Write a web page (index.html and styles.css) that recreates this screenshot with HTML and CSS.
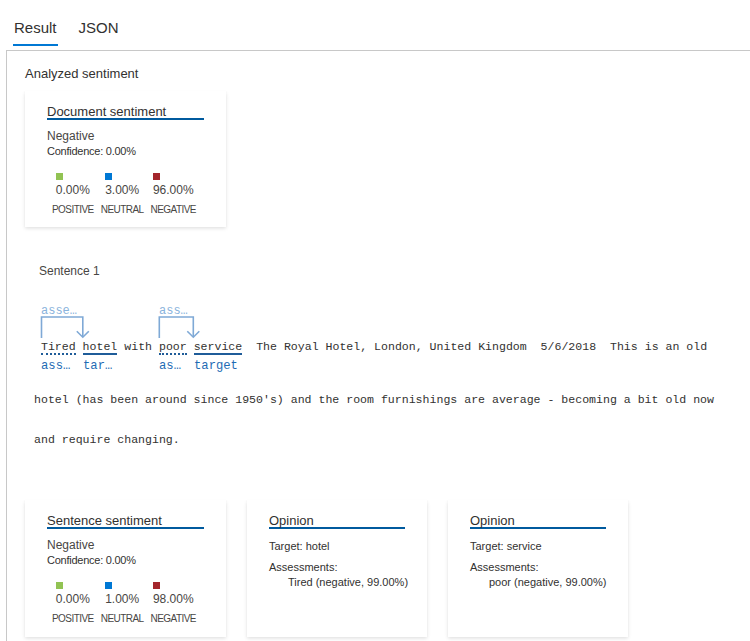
FILE: index.html
```html
<!DOCTYPE html>
<html>
<head>
<meta charset="utf-8">
<link rel="stylesheet" href="styles.css">
</head>
<body>
<div class="tabs">
  <div class="tab active">Result</div>
  <div class="tab">JSON</div>
</div>
<div class="panel">
  <div class="heading">Analyzed sentiment</div>
  <div class="card sent-card">
    <div class="card-title">Document sentiment</div>
    <div class="label-main">Negative</div>
    <div class="confidence">Confidence: 0.00%</div>
    <div class="scores">
      <div class="score"><div class="score-top"><span class="sq pos"></span><span class="val">0.00%</span></div><div class="score-label">POSITIVE</div></div>
      <div class="score"><div class="score-top"><span class="sq neu"></span><span class="val">3.00%</span></div><div class="score-label">NEUTRAL</div></div>
      <div class="score"><div class="score-top"><span class="sq neg"></span><span class="val">96.00%</span></div><div class="score-label">NEGATIVE</div></div>
    </div>
  </div>

  <div class="sentence">
    <div class="sentence-label">Sentence 1</div>
    <div class="annotated">
      <svg class="brackets" width="200" height="40" viewBox="0 0 200 40">
        <g fill="none" stroke="#7fa9d6" stroke-width="1.6">
          <polyline points="7.5,38 7.5,17 48.8,17 48.8,37"/>
          <polyline points="42.8,31.2 48.8,37.2 54.8,31.2"/>
          <polyline points="125.3,38 125.3,17 159.3,17 159.3,37"/>
          <polyline points="153.3,31.2 159.3,37.2 165.3,31.2"/>
        </g>
      </svg>
      <span class="above a1">asse…</span>
      <span class="above a2">ass…</span>
      <div class="line first"> <span class="w dotted">Tired</span> <span class="w solid">hotel</span> with <span class="w dotted">poor</span> <span class="w solid">service</span>  The Royal Hotel, London, United Kingdom  5/6/2018  This is an old</div>
      <span class="below b1">ass…</span>
      <span class="below b2">tar…</span>
      <span class="below b3">as…</span>
      <span class="below b4">target</span>
    </div>
    <div class="line">hotel (has been around since 1950's) and the room furnishings are average - becoming a bit old now</div>
    <div class="line">and require changing.</div>
  </div>

  <div class="cards-row">
    <div class="card sent-card">
      <div class="card-title">Sentence sentiment</div>
      <div class="label-main">Negative</div>
      <div class="confidence">Confidence: 0.00%</div>
      <div class="scores">
        <div class="score"><div class="score-top"><span class="sq pos"></span><span class="val">0.00%</span></div><div class="score-label">POSITIVE</div></div>
        <div class="score"><div class="score-top"><span class="sq neu"></span><span class="val">1.00%</span></div><div class="score-label">NEUTRAL</div></div>
        <div class="score"><div class="score-top"><span class="sq neg"></span><span class="val">98.00%</span></div><div class="score-label">NEGATIVE</div></div>
      </div>
    </div>
    <div class="card op-card">
      <div class="card-title">Opinion</div>
      <div class="op-target">Target: hotel</div>
      <div class="op-assess">Assessments:</div>
      <div class="op-item">Tired (negative, 99.00%)</div>
    </div>
    <div class="card op-card">
      <div class="card-title">Opinion</div>
      <div class="op-target">Target: service</div>
      <div class="op-assess">Assessments:</div>
      <div class="op-item">poor (negative, 99.00%)</div>
    </div>
  </div>
</div>
</body>
</html>
```
FILE: styles.css
```css
html, body {
  margin: 0;
  padding: 0;
  overflow: hidden;
  background: #fff;
}
body {
  font-family: "Segoe UI", "Liberation Sans", Arial, sans-serif;
  color: #323130;
  width: 750px;
  height: 641px;
}
.tabs {
  display: flex;
  height: 50px;
  padding-left: 13px;
  box-sizing: border-box;
}
.tab {
  font-size: 15px;
  line-height: 20px;
  padding: 18px 1px 6px;
  border-bottom: 2px solid transparent;
  height: 20px;
  color: #323130;
}
.tab + .tab {
  margin-left: 20px;
}
.tab.active {
  border-bottom-color: #0078d4;
}
.panel {
  margin-left: 6px;
  border-top: 1px solid #c8c8c8;
  border-left: 1px solid #c8c8c8;
  padding: 14px 0 40px 18px;
  min-height: 620px;
}
.heading {
  font-size: 13px;
  line-height: 18px;
  color: #323130;
}
.card {
  background: #fff;
  box-shadow: 0 1.6px 3.6px 0 rgba(0,0,0,0.13), 0 0.3px 0.9px 0 rgba(0,0,0,0.11);
  box-sizing: border-box;
  padding: 0 22px 10px;
}
.sent-card {
  width: 201px;
  height: 136px;
  margin-top: 8px;
}
.card-title {
  font-size: 13px;
  line-height: 13px;
  padding-top: 14px;
  height: 13px;
  border-bottom: 2px solid #005a9e;
  color: #323130;
  white-space: nowrap;
}
.label-main {
  font-size: 12px;
  line-height: 16px;
  margin-top: 8px;
  color: #484644;
}
.confidence {
  font-size: 11px;
  line-height: 14px;
  letter-spacing: -0.25px;
  color: #323130;
}
.scores {
  display: flex;
  gap: 7px;
  margin-top: 15px;
  margin-left: 5px;
}
.score {
  display: flex;
  flex-direction: column;
  align-items: center;
}
.score-top {
  display: flex;
  flex-direction: column;
  align-items: flex-start;
}
.sq {
  width: 7px;
  height: 7px;
  display: block;
}
.sq.pos { background: #92c353; }
.sq.neu { background: #0078d4; }
.sq.neg { background: #a4262c; }
.val {
  font-size: 12px;
  line-height: 16px;
  margin-top: 2px;
  color: #484644;
}
.score-label {
  font-size: 10px;
  line-height: 14px;
  margin-top: 5px;
  letter-spacing: -0.55px;
  color: #484644;
  white-space: nowrap;
}
.sentence {
  margin-left: 9px;
  margin-top: 36px;
}
.sentence-label {
  font-size: 12px;
  line-height: 16px;
  padding-left: 5px;
  color: #484644;
}
.annotated {
  position: relative;
  margin-top: 21px;
  padding-top: 27px;
  margin-bottom: 13px;
}
.brackets {
  position: absolute;
  left: 0;
  top: 0;
}
.line {
  font-family: "Liberation Mono", "DejaVu Sans Mono", monospace;
  font-size: 11.57px;
  line-height: 40px;
  height: 40px;
  white-space: pre;
  color: #323130;
}
.w.solid {
  border-bottom: 2px solid #1f5c99;
}
.w.dotted {
  border-bottom: 2px dotted #1f5c99;
}
.above, .below {
  position: absolute;
  font-family: "Liberation Mono", "DejaVu Sans Mono", monospace;
  white-space: pre;
  line-height: 14px;
}
.above {
  top: 4px;
  font-size: 12px;
  color: #8ab3dc;
}
.a1 { left: 7px; }
.a2 { left: 125px; }
.below {
  top: 59px;
  font-size: 12.2px;
  color: #1f6cb4;
}
.b1 { left: 7px; }
.b2 { left: 49px; }
.b3 { left: 125px; }
.b4 { left: 160px; }
.cards-row {
  display: flex;
  gap: 21px;
  margin-top: 40px;
}
.cards-row .sent-card {
  margin-top: 0;
  height: 137px;
}
.op-card {
  width: 180px;
  height: 137px;
}
.op-target {
  font-size: 11px;
  line-height: 14px;
  margin-top: 10px;
  color: #323130;
}
.op-assess {
  font-size: 11px;
  line-height: 14px;
  margin-top: 7px;
  color: #323130;
}
.op-item {
  font-size: 11px;
  line-height: 14px;
  margin-top: 1px;
  padding-left: 19px;
  color: #323130;
  white-space: nowrap;
}
```
